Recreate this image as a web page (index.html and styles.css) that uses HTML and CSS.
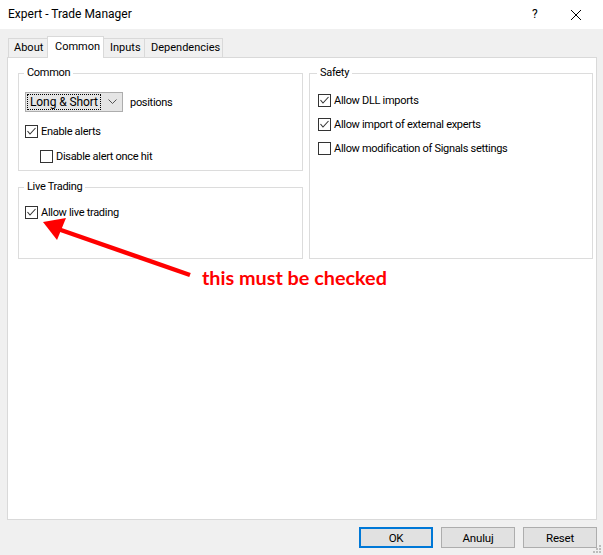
FILE: index.html
```html
<!DOCTYPE html>
<html>
<head>
<meta charset="utf-8">
<link rel="stylesheet" href="styles.css">
</head>
<body>
<div class="window">
  <div class="titlebar">
    <div class="title">Expert - Trade Manager</div>
    <div class="tb-help">?</div>
    <div class="tb-close">
      <svg width="12" height="12" viewBox="0 0 12 12"><path d="M1 1 L11 11 M11 1 L1 11" stroke="#000" stroke-width="1" fill="none"/></svg>
    </div>
  </div>
  <div class="body">
    <div class="tabs">
      <div class="tab">About</div>
      <div class="tab active">Common</div>
      <div class="tab">Inputs</div>
      <div class="tab">Dependencies</div>
    </div>
    <div class="panel">
      <div class="cols">
        <div class="col">
          <fieldset class="group g-common">
            <legend>Common</legend>
            <div class="combo-row">
              <div class="combo">
                <span class="combo-text">Long &amp; Short</span>
                <svg class="chev" width="9" height="6" viewBox="0 0 9 6"><path d="M0.5 0.5 L4.5 4.5 L8.5 0.5" stroke="#555" fill="none"/></svg>
              </div>
              <span class="after">positions</span>
            </div>
            <label class="cb"><span class="box on"><svg width="11" height="11" viewBox="0 0 11 11"><path d="M1.5 5 L4 8 L9.5 2" stroke="#333" stroke-width="1.1" fill="none"/></svg></span>Enable alerts</label>
            <label class="cb indent"><span class="box"></span>Disable alert once hit</label>
          </fieldset>
          <fieldset class="group g-live">
            <legend>Live Trading</legend>
            <label class="cb"><span class="box on"><svg width="11" height="11" viewBox="0 0 11 11"><path d="M1.5 5 L4 8 L9.5 2" stroke="#333" stroke-width="1.1" fill="none"/></svg></span>Allow live trading</label>
          </fieldset>
        </div>
        <div class="col">
          <fieldset class="group g-safety">
            <legend>Safety</legend>
            <label class="cb"><span class="box on"><svg width="11" height="11" viewBox="0 0 11 11"><path d="M1.5 5 L4 8 L9.5 2" stroke="#333" stroke-width="1.1" fill="none"/></svg></span>Allow DLL imports</label>
            <label class="cb"><span class="box on"><svg width="11" height="11" viewBox="0 0 11 11"><path d="M1.5 5 L4 8 L9.5 2" stroke="#333" stroke-width="1.1" fill="none"/></svg></span>Allow import of external experts</label>
            <label class="cb"><span class="box"></span>Allow modification of Signals settings</label>
          </fieldset>
        </div>
      </div>
    </div>
    <div class="buttons">
      <div class="btn default">OK</div>
      <div class="btn">Anuluj</div>
      <div class="btn">Reset</div>
    </div>
  </div>
  <svg class="grip" width="10" height="10" viewBox="0 0 10 10">
    <rect x="7" y="1" width="2" height="2" fill="#bcbcbc"/>
    <rect x="4" y="4" width="2" height="2" fill="#bcbcbc"/>
    <rect x="7" y="4" width="2" height="2" fill="#bcbcbc"/>
    <rect x="1" y="7" width="2" height="2" fill="#bcbcbc"/>
    <rect x="4" y="7" width="2" height="2" fill="#bcbcbc"/>
    <rect x="7" y="7" width="2" height="2" fill="#bcbcbc"/>
  </svg>
  <svg class="arrow" width="200" height="70" viewBox="0 0 200 70">
    <line x1="190" y1="67" x2="58" y2="21" stroke="#ff0000" stroke-width="4.5"/>
    <polygon points="43,14 66,10 57,32" fill="#ff0000"/>
  </svg>
  <div class="note">this must be checked</div>
</div>
</body>
</html>
```

FILE: styles.css
```css
html, body {
  margin: 0;
  padding: 0;
}
body {
  width: 603px;
  height: 555px;
  overflow: hidden;
  background: #f0f0f0;
  font-family: Roboto, "Liberation Sans", Arial, sans-serif;
  font-size: 11px;
  color: #000;
}
.window {
  position: relative;
  width: 603px;
  height: 555px;
}
.titlebar {
  height: 29px;
  background: #fff;
  display: flex;
  align-items: center;
}
.title {
  flex: 1;
  padding-left: 8px;
  font-size: 12px;
  padding-bottom: 1px;
}
.tb-help {
  width: 20px;
  margin-right: 18px;
  font-size: 12px;
  padding-bottom: 1px;
}
.tb-close {
  width: 29px;
  margin-right: 4px;
  display: flex;
  align-items: center;
}
.body {
  padding: 7px 6px 0 7px;
}
.tabs {
  display: flex;
  align-items: flex-end;
  height: 21px;
  padding-left: 1px;
  position: relative;
  z-index: 1;
}
.tab {
  height: 19px;
  line-height: 18px;
  padding: 0 0 0 6px;
  border: 1px solid #d9d9d9;
  border-bottom: none;
  border-left: none;
  background: #f0f0f0;
  box-sizing: border-box;
  white-space: nowrap;
}
.tab:first-child {
  border-left: 1px solid #d9d9d9;
  width: 40px;
  padding-left: 5px;
}
.tab.active {
  height: 22px;
  line-height: 19px;
  background: #fff;
  border-left: 1px solid #d9d9d9;
  margin-left: -1px;
  margin-bottom: -1px;
  width: 57px;
  padding: 0 0 0 7px;
}
.tab:nth-child(3) { width: 41px; }
.tab:nth-child(4) { width: 78px; }
.panel {
  height: 463px;
  box-sizing: border-box;
  background: #fff;
  border: 1px solid #d9d9d9;
  padding: 8px 3px 0 10px;
  letter-spacing: -0.3px;
}
.cols {
  display: grid;
  grid-template-columns: 285px 284px;
  column-gap: 6px;
}
.col {
  display: flex;
  flex-direction: column;
}
.group {
  margin: 0;
  border: 1px solid #dcdcdc;
  padding: 0 6px;
  min-width: 0;
}
.group legend {
  padding: 0 3px 0 3px;
  margin-left: -1px;
  line-height: 14px;
}
.g-common {
  height: 105px;
  box-sizing: border-box;
  padding-top: 12px;
}
.g-live {
  margin-top: 9px;
  height: 79px;
  box-sizing: border-box;
  padding-top: 12px;
}
.g-safety {
  height: 193px;
  box-sizing: border-box;
  padding-top: 14px;
  padding-left: 8px;
}
.g-safety .cb {
  margin-bottom: 11px;
}
.combo-row {
  display: flex;
  align-items: center;
  gap: 7px;
  margin-bottom: 13px;
}
.combo {
  width: 98px;
  height: 20px;
  box-sizing: border-box;
  background: #e5e5e5;
  border: 1px solid #adadad;
  display: flex;
  align-items: center;
  padding: 1px;
}
.combo-text {
  width: 74px;
  height: 16px;
  line-height: 14px;
  box-sizing: border-box;
  border: 1px dotted #000;
  padding-left: 2px;
  white-space: nowrap;
  overflow: hidden;
  font-size: 12px;
  letter-spacing: -0.1px;
}
.chev {
  margin-left: 7px;
}
.cb {
  display: flex;
  align-items: center;
  height: 13px;
  margin-bottom: 12px;
  white-space: nowrap;
}
.cb.indent {
  margin-left: 15px;
}
.box {
  width: 13px;
  height: 13px;
  box-sizing: border-box;
  border: 1px solid #333;
  background: #fff;
  margin-right: 3px;
  display: flex;
  align-items: center;
  justify-content: center;
  flex: none;
}
.buttons {
  display: flex;
  justify-content: flex-end;
  gap: 8px;
  padding-top: 7px;
  padding-right: 0;
}
.btn {
  width: 74px;
  height: 21px;
  box-sizing: border-box;
  background: #e1e1e1;
  border: 1px solid #adadad;
  display: flex;
  align-items: center;
  justify-content: center;
  font-size: 11.5px;
  letter-spacing: -0.2px;
}
.btn.default {
  border: 2px solid #0078d7;
}
.grip {
  position: absolute;
  right: 1px;
  bottom: 1px;
}
.arrow {
  position: absolute;
  left: 0;
  top: 208px;
}
.note {
  position: absolute;
  left: 202px;
  top: 265px;
  font-family: Lato, "Liberation Sans", sans-serif;
  font-weight: bold;
  font-size: 19.8px;
  letter-spacing: 0;
  color: #ff0000;
  white-space: nowrap;
}
```
